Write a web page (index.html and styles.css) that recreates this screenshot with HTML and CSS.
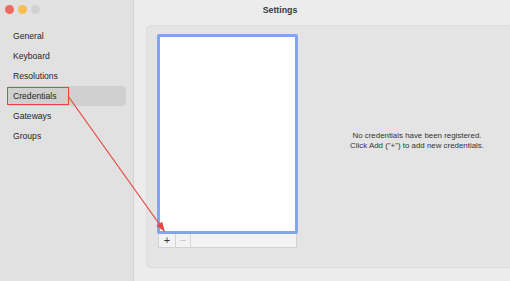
FILE: index.html
```html
<!DOCTYPE html>
<html lang="en">
<head>
    <meta charset="UTF-8">
    <title>Settings</title>
    <link rel="stylesheet" href="styles.css">
</head>
<body>

<div class="window">
    <!-- Sidebar -->
    <div class="sidebar">
        <div class="lights">
            <span class="light close"></span>
            <span class="light min"></span>
            <span class="light zoom"></span>
        </div>
        <div class="menu">
            <div class="menu-item">General</div>
            <div class="menu-item">Keyboard</div>
            <div class="menu-item">Resolutions</div>
            <div class="menu-item active">Credentials</div>
            <div class="menu-item">Gateways</div>
            <div class="menu-item">Groups</div>
        </div>
    </div>

    <!-- Main area -->
    <div class="content">
        <div class="title">Settings</div>
        <div class="panel">
            <div class="list-col">
                <div class="list"></div>
                <div class="toolbar">
                    <div class="tool add">+</div>
                    <div class="tool remove">&minus;</div>
                    <div class="tool-rest"></div>
                </div>
            </div>
            <div class="empty">
                No credentials have been registered.<br>
                Click Add ("+") to add new credentials.
            </div>
        </div>
    </div>

    <!-- Red annotation on top -->
    <svg class="annotation" width="510" height="281" viewBox="0 0 510 281">
        <rect x="7.5" y="87.5" width="61" height="17" fill="none" stroke="#e8453c" stroke-width="1"/>
        <line x1="68" y1="96" x2="160" y2="225" stroke="#e8453c" stroke-width="1.2"/>
        <polygon points="165,232 162.2,221.8 156.4,225.8" fill="#e8453c"/>
    </svg>
</div>

</body>
</html>
```

FILE: styles.css
```css
body {
    margin: 0;
    overflow: hidden;
    font-family: "Liberation Sans", Arial, sans-serif;
    color: #2b2b2b;
}
.window {
    position: relative;
    display: flex;
    width: 560px;
    height: 281px;
    background: #ececec;
}

/* sidebar */
.sidebar {
    width: 133px;
    flex-shrink: 0;
    background: #e1e1e1;
    border-right: 1px solid #d3d3d3;
}
.lights {
    display: flex;
    gap: 4px;
    padding: 5px 0 0 5px;
}
.light {
    width: 9px;
    height: 9px;
    border-radius: 50%;
}
.light.close { background: #ec6a5f; }
.light.min { background: #f4bf50; }
.light.zoom { background: #d2d2d2; }

.menu {
    margin-top: 12px;
}
.menu-item {
    height: 20px;
    line-height: 20px;
    margin: 0 7px;
    padding-left: 6px;
    font-size: 8.6px;
    color: #262626;
    border-radius: 4px;
}
.menu-item.active {
    background: #d0d0d0;
}

/* main */
.content {
    flex: 1;
    display: flex;
    flex-direction: column;
}
.title {
    margin-left: -134px;
    height: 25px;
    line-height: 20px;
    text-align: center;
    font-size: 8.8px;
    font-weight: bold;
    color: #3a3a3a;
}
.panel {
    display: flex;
    margin: 0 12px;
    height: 243px;
    box-sizing: border-box;
    padding: 8px 11px 19px 10px;
    background: #e4e4e4;
    border: 1px solid #dddddd;
    border-radius: 5px;
}
.list-col {
    width: 141px;
    display: flex;
    flex-direction: column;
}
.list {
    height: 196px;
    background: #fff;
    border: 3px solid #84a5ea;
    border-radius: 2px;
}
.toolbar {
    display: flex;
    height: 13px;
    margin: 0 1px;
    background: #f3f3f3;
    border: 1px solid #d2d2d2;
    border-top: none;
}
.tool {
    display: flex;
    align-items: center;
    justify-content: center;
    font-size: 11px;
    line-height: 1;
    border-right: 1px solid #d6d6d6;
}
.tool.add {
    width: 16px;
    color: #333;
}
.tool.remove {
    width: 14px;
    color: #c4c4c4;
}
.tool-rest {
    flex: 1;
}
.empty {
    flex: 1;
    display: flex;
    align-items: center;
    justify-content: center;
    text-align: center;
    font-size: 7.9px;
    line-height: 10px;
    color: #333;
}

.annotation {
    position: absolute;
    left: 0;
    top: 0;
    pointer-events: none;
}
```
